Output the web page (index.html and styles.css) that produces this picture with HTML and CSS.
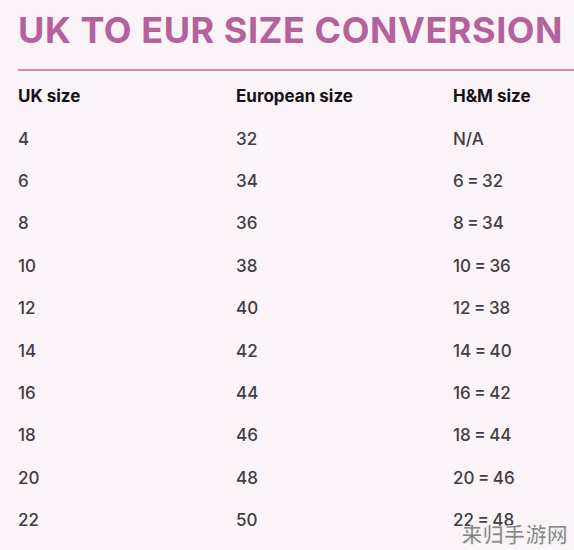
FILE: index.html
```html
<!DOCTYPE html>
<html lang="en">

<head>
    <meta charset="UTF-8">
    <meta name="viewport" content="width=device-width, initial-scale=1.0">
    <title>UK to EUR size conversion</title>
    <link rel="stylesheet" href="styles.css">
</head>

<body>
    <div class="page">
        <h1 class="title">UK TO EUR SIZE CONVERSION</h1>
        <hr class="rule">
        <!-- Tabela de tamanhos -->
        <div class="size-table">
            <div class="row head">
                <span>UK size</span>
                <span>European size</span>
                <span>H&amp;M size</span>
            </div>
            <div class="row"><span>4</span><span>32</span><span>N/A</span></div>
            <div class="row"><span>6</span><span>34</span><span>6 = 32</span></div>
            <div class="row"><span>8</span><span>36</span><span>8 = 34</span></div>
            <div class="row"><span>10</span><span>38</span><span>10 = 36</span></div>
            <div class="row"><span>12</span><span>40</span><span>12 = 38</span></div>
            <div class="row"><span>14</span><span>42</span><span>14 = 40</span></div>
            <div class="row"><span>16</span><span>44</span><span>16 = 42</span></div>
            <div class="row"><span>18</span><span>46</span><span>18 = 44</span></div>
            <div class="row"><span>20</span><span>48</span><span>20 = 46</span></div>
            <div class="row"><span>22</span><span>50</span><span>22 = 48</span></div>
        </div>
    </div>
    <div class="watermark">来归手游网</div>
</body>

</html>
```

FILE: styles.css
```css
/* Página */
body {
    margin: 0;
    background-color: #faf3f8;
    font-family: Inter, "Noto Sans", sans-serif;
    overflow: hidden;
}

.page {
    padding: 12px 0 0 18px;
}

.title {
    margin: 0;
    font-size: 36px;
    font-weight: 700;
    line-height: 36px;
    letter-spacing: 0.55px;
    color: #b5619a;
    white-space: nowrap;
}

.rule {
    margin: 21px 0 0 0;
    border: none;
    border-top: 2px solid #c98fb0;
}

/* Tabela */
.size-table {
    margin-top: 4px;
}

.row {
    display: grid;
    grid-template-columns: 218px 217px 1fr;
    height: 42.4px;
    align-items: center;
    font-size: 17px;
    font-weight: 500;
    word-spacing: -1px;
    color: #423d42;
}

.row.head {
    font-weight: 700;
    word-spacing: 0;
    color: #151215;
}

.watermark {
    position: absolute;
    right: 6px;
    bottom: 6px;
    font-family: "Noto Sans CJK SC", sans-serif;
    font-size: 21px;
    font-weight: 700;
    line-height: 22px;
    letter-spacing: 0.3px;
    color: #858585;
    -webkit-text-stroke: 0.6px #ffffff;
}
```
